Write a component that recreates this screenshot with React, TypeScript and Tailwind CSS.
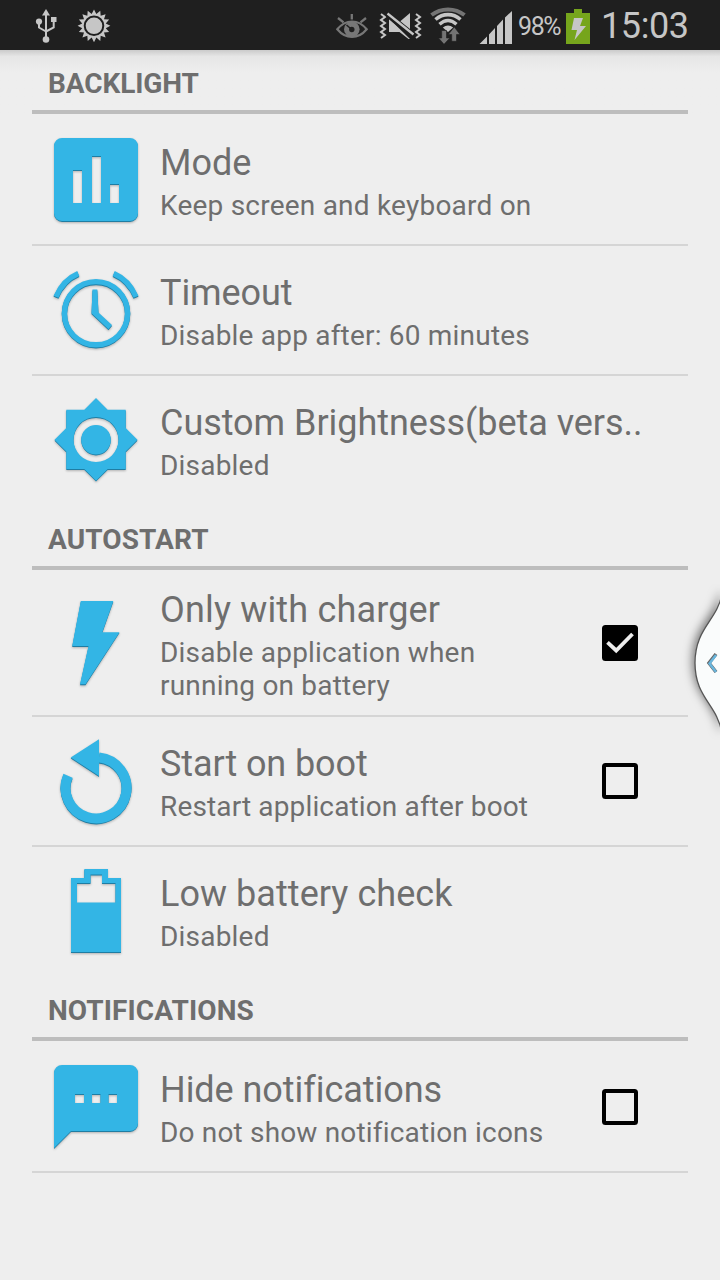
import type { ReactNode } from "react";

const BLUE = "#33b5e5";

function Glyph({ children }: { children: ReactNode }) {
  return (
    <svg viewBox="0 0 96 96" className="h-24 w-24 shrink-0 drop-shadow-[0_1px_1px_rgba(0,0,0,0.25)]">
      <g transform="translate(0 0.9)" fill="#1f7da3" color="#1f7da3">{children}</g>
      <g fill={BLUE} color={BLUE}>{children}</g>
    </svg>
  );
}

const icons = {
  chart: <path fillRule="evenodd" d="M14 6h68a8 8 0 0 1 8 8v67a8 8 0 0 1-8 8H14a8 8 0 0 1-8-8V14a8 8 0 0 1 8-8ZM25 38v33h9V38ZM44 24v47h9V24ZM62 52v19h9V52Z" />,
  alarm: (
    <g fill="none" stroke="currentColor">
      <circle cx="48" cy="51.200" r="31.600" strokeWidth="5.400" />
      <path d="M8 34.800C12 25.300 19 16.300 30.300 11.500M65.700 11.500C77 16.300 84 25.300 88 34.800" strokeWidth="5.400" />
      <path d="M44.500 27.500h4.800l1.200 23 13.500 12.500-3.500 4.300-17-16Z" fill="currentColor" stroke="none" />
    </g>
  ),
  sun: <path fillRule="evenodd" d="M48 6 59.700 17.800H77.700V36L89.500 47.800 77.700 59.500V77H59.700L48 88.700 36.300 77H18.300V59.500L6.500 47.800 18.300 36V17.800H36.300ZM48 25a22.500 22.500 0 1 0 0 45a22.500 22.500 0 1 0 0-45ZM48 32.900a14.800 14.800 0 1 1 0 29.600a14.800 14.800 0 1 1 0-29.600Z" />,
  bolt: <path d="M32.800 6H65.300L54.300 37.200H71.500L37.500 89.300H32L40.500 51H24.200Z" />,
  restart: (
    <g>
      <path d="M20 42.800A30.500 30.500 0 1 0 51 24.500" fill="none" stroke="currentColor" strokeWidth="10" />
      <path d="M51 6.200V43L22.700 24.500Z" />
    </g>
  ),
  battery: <path fillRule="evenodd" d="M36.300 6H60v9h13v74H23V15h13.300ZM42.500 11.500V20H29v19.500h38.500V20H54V11.500Z" />,
  chat: <path fillRule="evenodd" d="M14 6h68a8 8 0 0 1 8 8v50a8 8 0 0 1-8 8H23L6 89V14a8 8 0 0 1 8-8ZM27 35v9h9v-9ZM44 35v9h8.500v-9ZM60.500 35v9h8.500v-9Z" />,
};

function Header({ title, spacing }: { title: string; spacing: string }) {
  return (
    <h2 className="mx-8 flex h-16 items-center border-b-4 border-[#bdbdbd] pt-[7px] pl-4 text-[28px] font-bold leading-none text-[#6e6e6e]">
      <span className={spacing}>{title}</span>
    </h2>
  );
}

function Checkbox({ on }: { on: boolean }) {
  return (
    <svg viewBox="0 0 36 36" className="h-9 w-9 shrink-0">
      <rect x="2" y="2" width="32" height="32" rx="1.500" fill={on ? "#000" : "none"} stroke="#000" strokeWidth="4" />
      {on && <path d="m5.500 17.300 8.700 8.200 16.300-16.500" fill="none" stroke="#eee" strokeWidth="3.800" />}
    </svg>
  );
}

type RowProps = {
  icon: ReactNode;
  title: string;
  lines: string[];
  divider?: boolean;
  tall?: boolean;
  check?: boolean;
  titleStyle?: string;
  lineStyle?: string;
};

function Row({ icon, title, lines, divider, tall, check, titleStyle = "", lineStyle = "tracking-[0.2px]" }: RowProps) {
  return (
    <div className={`mx-8 flex items-center border-t-2 pl-4 ${tall ? "h-[145px] pb-px" : "h-[130px]"} ${divider ? "border-[#d5d5d5]" : "border-transparent"}`}>
      <Glyph>{icon}</Glyph>
      <div className={`ml-4 min-w-0 flex-1 whitespace-nowrap text-[#6e6e6e] ${tall ? "pt-[5px]" : "pt-1"}`}>
        <div className={`text-[36px] leading-[42px] ${titleStyle}`}>{title}</div>
        <div className={`mt-[5px] text-[28px] leading-[33px] ${lineStyle}`}>
          {lines.map((line) => (
            <div key={line}>{line}</div>
          ))}
        </div>
      </div>
      {check !== undefined && (
        <div className="mr-[50px] flex shrink-0">
          <Checkbox on={check} />
        </div>
      )}
    </div>
  );
}

function sunburst(cx: number, cy: number, outer: number, inner: number, n: number) {
  return Array.from({ length: n * 2 }, (_, i) => {
    const r = i % 2 ? inner : outer;
    const a = (i * Math.PI) / n - Math.PI / 2;
    return `${(cx + r * Math.cos(a)).toFixed(2)},${(cy + r * Math.sin(a)).toFixed(2)}`;
  }).join(" ");
}

function StatusBar() {
  return (
    <header className="flex h-[50px] items-center bg-[#1f1f1f] text-[#c6c6c6]">
      <svg viewBox="32 0 80 50" className="ml-8 h-[50px] w-20" fill="#c6c6c6">
        <path d="M46 9l4 6.500H42Z" />
        <circle cx="39" cy="21.500" r="3.100" />
        <rect x="51" y="17" width="5.500" height="5" />
        <circle cx="46" cy="39.500" r="3.300" />
        <path d="M46 14V39M39 22v5.500L46 31.500M53.700 21v6.500L46 31.500" fill="none" stroke="#c6c6c6" strokeWidth="2" />
        <polygon points={sunburst(94, 25.8, 16.4, 12, 16)} />
        <circle cx="94" cy="25.800" r="9.300" fill="none" stroke="#1f1f1f" strokeWidth="2" />
      </svg>
      <svg viewBox="330 0 186 50" className="ml-[218px] h-[50px] w-[186px]" fill="#c6c6c6">
        <g stroke="#777" fill="none">
          <path d="M337.300 29.300C342 23.500 347 21.500 352 21.500S362 23.500 366.700 29.300C362 35 357 37 352 37S342 35 337.300 29.300Z" strokeWidth="2.200" />
          <circle cx="351.800" cy="29.200" r="7.800" fill="#777" stroke="none" />
          <path d="M351.800 14v5.500M338 18l5.500 4.300M366 18l-5.500 4.300" strokeWidth="2.300" />
          <path d="M346.500 25l5.300 4.500" stroke="#1f1f1f" strokeWidth="1.600" />
          <circle cx="351.800" cy="29.500" r="2.700" fill="#1f1f1f" stroke="none" />
        </g>
        <path d="M381 14l4 3-4 3 4 3-4 3 4 3-4 3 4 3-4 3M416 14l4 3-4 3 4 3-4 3 4 3-4 3 4 3-4 3" fill="none" stroke="#c6c6c6" strokeWidth="2" />
        <path d="M389 18.500 410 39H408.500L399.500 32H389ZM400 21.500 410 13V31Z" />
        <path d="M387.500 14.500 413.500 35.500" fill="none" stroke="#1f1f1f" strokeWidth="5.500" />
        <path d="M387.500 13.500 413.500 34.500" fill="none" stroke="#c6c6c6" strokeWidth="2.300" />
        <g fill="none">
          <path d="M431.500 15C441 7.500 455 7.500 464.500 15" stroke="#747474" strokeWidth="4" />
          <path d="M435.500 19.500C443 13 453 13 460.500 19.500" stroke="#c6c6c6" strokeWidth="3.600" />
          <path d="M439.500 24.300C445 19.300 451 19.300 456.500 24.300" stroke="#c6c6c6" strokeWidth="3.400" />
        </g>
        <path d="M442.800 27.500Q448 23.500 453.200 27.500L448 32Z" />
        <path d="M441.700 30.500h4.800V38h3.300L444 44.300 438.500 38h3.200ZM451.700 41.300V34.500H448.300l6-7.500 5.700 7.500H456.500v6.800Z" fill="#747474" stroke="#1f1f1f" strokeWidth=".6" />
        <path d="M479.500 44 487 36.500V44ZM489 44V34.500L495 28V44ZM497 44V26L503 19.500V44ZM505 44V17.500L512 11V44Z" />
      </svg>
      <span className="ml-[2px] w-[48px] whitespace-nowrap pt-[3px] text-[25px] leading-none tracking-[-1.4px]">98%</span>
      <svg viewBox="0 0 24 35" className="mt-[3px] h-[35px] w-6">
        <path d="M8 0h8v4h8v31H0V4h8Z" fill="#76a51c" />
        <path d="M8 9h9l-3 8h6L8.500 31l2.500-10H5.500Z" fill="#c6c6c6" />
      </svg>
      <span className="ml-[11px] whitespace-nowrap pt-[2px] text-[36px] leading-none tracking-[-0.4px]">15:03</span>
    </header>
  );
}

export default function App() {
  return (
    <div className="relative h-[1280px] w-[720px] overflow-hidden bg-[#eee] font-['Roboto',sans-serif]">
      <StatusBar />
      <main>
        <div className="bg-linear-to-b from-[#cbcbcb] via-[#e6e6e6] via-10% to-[#eee] to-35%">
          <Header title="BACKLIGHT" spacing="tracking-[-0.1px]" />
        </div>
        <Row icon={icons.chart} title="Mode" lines={["Keep screen and keyboard on"]} lineStyle="tracking-[0.22px]" />
        <Row icon={icons.alarm} title="Timeout" lines={["Disable app after: 60 minutes"]} divider titleStyle="tracking-[-0.1px]" />
        <Row icon={icons.sun} title="Custom Brightness(beta vers.." lines={["Disabled"]} divider titleStyle="tracking-[-0.04px]" />
        <div className="mt-[2px]">
          <Header title="AUTOSTART" spacing="tracking-[0.1px]" />
        </div>
        <Row icon={icons.bolt} title="Only with charger" lines={["Disable application when", "running on battery"]} tall check={true} titleStyle="tracking-[0.17px]" />
        <Row icon={icons.restart} title="Start on boot" lines={["Restart application after boot"]} divider check={false} titleStyle="tracking-[-0.1px]" lineStyle="tracking-[0.14px]" />
        <Row icon={icons.battery} title="Low battery check" lines={["Disabled"]} divider titleStyle="tracking-[0.05px]" />
        <div className="mt-[2px]">
          <Header title="NOTIFICATIONS" spacing="tracking-[0.1px]" />
        </div>
        <Row icon={icons.chat} title="Hide notifications" lines={["Do not show notification icons"]} check={false} titleStyle="[font-variant-ligatures:none] tracking-[-0.05px]" lineStyle="tracking-[0.17px]" />
        <div className="mx-8 h-[2px] bg-[#d5d5d5]" />
      </main>
      <svg viewBox="0 0 60 160" className="absolute right-0 top-[584px] h-40 w-[60px]">
        <path d="M62 10C57 37 35 44 35 79S57 120 62 149Z" fill="#fafcfc" stroke="#555" strokeWidth="1.300" className="drop-shadow-[-2px_-2px_5px_rgba(0,0,0,0.5)]" />
        <path d="M56 70 49 79 56 88" fill="none" stroke="#666" strokeWidth="3.500" />
        <path d="M56 71 49.500 79.500 56 88" fill="none" stroke="#68b5dc" strokeWidth="2.500" />
      </svg>
    </div>
  );
}
